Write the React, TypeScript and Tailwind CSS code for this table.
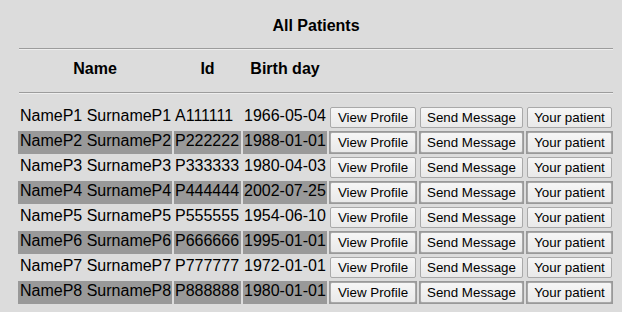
const patients = [
  { name: "NameP1 SurnameP1", id: "A111111", birth: "1966-05-04" },
  { name: "NameP2 SurnameP2", id: "P222222", birth: "1988-01-01" },
  { name: "NameP3 SurnameP3", id: "P333333", birth: "1980-04-03" },
  { name: "NameP4 SurnameP4", id: "P444444", birth: "2002-07-25" },
  { name: "NameP5 SurnameP5", id: "P555555", birth: "1954-06-10" },
  { name: "NameP6 SurnameP6", id: "P666666", birth: "1995-01-01" },
  { name: "NameP7 SurnameP7", id: "P777777", birth: "1972-01-01" },
  { name: "NameP8 SurnameP8", id: "P888888", birth: "1980-01-01" },
];

const cols = "grid grid-cols-[154px_67px_84px_88px_105px_87px] gap-x-[2px]";

function Btn({ label }: { label: string }) {
  return (
    <button className="w-full h-[21px] bg-gradient-to-b from-[#f6f6f6] to-[#e9e9e9] border border-[#a9a9a9] rounded-[2px] text-[13.33px] leading-[15px] text-black">
      {label}
    </button>
  );
}

export default function App() {
  return (
    <div className="min-h-[312px] w-[622px] bg-[#dcdcdc] text-black font-['Liberation_Sans',Arial,sans-serif]">
      <div className="ml-[19px] w-[594px]">
        {/* Title */}
        <div className="pt-[17px] text-center text-[16px] leading-[18px] font-bold">All Patients</div>
        <div className="mt-[13px] border-t border-t-[#9c9c9c] border-b border-b-[#eeeeee]" />

        {/* Header */}
        <div className={`${cols} -ml-[1px] h-[42px] pt-[10px] text-[16px] leading-[18px] font-bold`}>
          <div className="text-center">Name</div>
          <div className="text-center">Id</div>
          <div className="text-center">Birth day</div>
        </div>
        <div className="border-t border-t-[#9c9c9c] border-b border-b-[#eeeeee]" />

        {/* Rows */}
        <div className="-ml-[1px] mt-[12px] flex flex-col gap-y-[2px]">
          {patients.map((p, i) => {
            const bg = i % 2 === 1 ? "bg-[#999999]" : "";
            return (
              <div key={p.id} className={`${cols} h-[23px] text-[16px] leading-[17px]`}>
                <div className={`${bg} pl-[2px] pt-[1px] whitespace-nowrap`}>{p.name}</div>
                <div className={`${bg} pl-[1px] pt-[1px] whitespace-nowrap`}>{p.id}</div>
                <div className={`${bg} pl-[1px] pt-[1px] whitespace-nowrap`}>{p.birth}</div>
                <div className={`${bg} p-px`}><Btn label="View Profile" /></div>
                <div className={`${bg} p-px`}><Btn label="Send Message" /></div>
                <div className={`${bg} p-px`}><Btn label="Your patient" /></div>
              </div>
            );
          })}
        </div>
      </div>
    </div>
  );
}
